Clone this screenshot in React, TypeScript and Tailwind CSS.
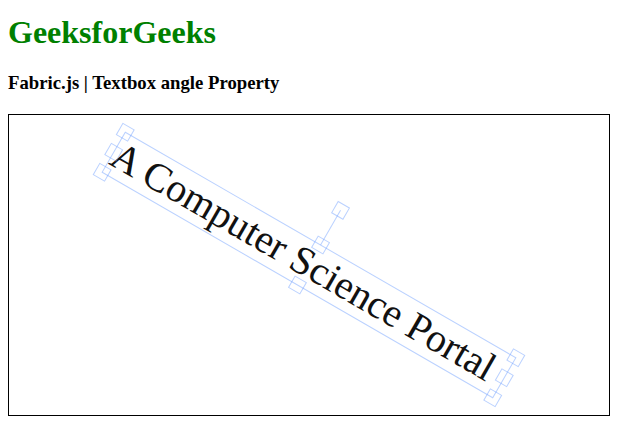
const W = 451
const H = 46.2
const CORNER = 13

// fabric-style control squares around the rotated textbox
const controls: [number, number][] = [
  [-W / 2, -H / 2],
  [0, -H / 2],
  [W / 2, -H / 2],
  [-W / 2, 0],
  [W / 2, 0],
  [-W / 2, H / 2],
  [0, H / 2],
  [W / 2, H / 2],
  [0, -H / 2 - 40],
]

function FabricCanvas() {
  return (
    <div className="mt-[20px] w-[602px] h-[302px] border border-black bg-white">
      <svg width="600" height="300" viewBox="0 0 600 300" className="block">
        <g transform="translate(300 150) rotate(30)">
          <text
            x={-225}
            y={12.57}
            fontSize={40}
            fill="#111"
            style={{ fontFamily: '"Liberation Serif", "Times New Roman", serif' }}
          >
            A Computer Science Portal
          </text>
          <g fill="none" stroke="rgba(102,153,255,0.45)" strokeWidth={1}>
            <rect x={-W / 2} y={-H / 2} width={W} height={H} />
            <line x1={0} y1={-H / 2} x2={0} y2={-H / 2 - 40} />
            {controls.map(([cx, cy], i) => (
              <rect
                key={i}
                x={cx - CORNER / 2}
                y={cy - CORNER / 2}
                width={CORNER}
                height={CORNER}
              />
            ))}
          </g>
        </g>
      </svg>
    </div>
  )
}

export default function App() {
  return (
    <div className="px-2 bg-white min-h-[434px] font-['Liberation_Serif','Times_New_Roman',serif] text-black">
      <h1 className="pt-[15px] text-[32px] leading-[35.4px] font-bold text-[#008000]">
        GeeksforGeeks
      </h1>
      <h3 className="mt-[23px] text-[18.72px] leading-[20.7px] font-bold">
        Fabric.js | Textbox angle Property
      </h3>
      <FabricCanvas />
    </div>
  )
}
